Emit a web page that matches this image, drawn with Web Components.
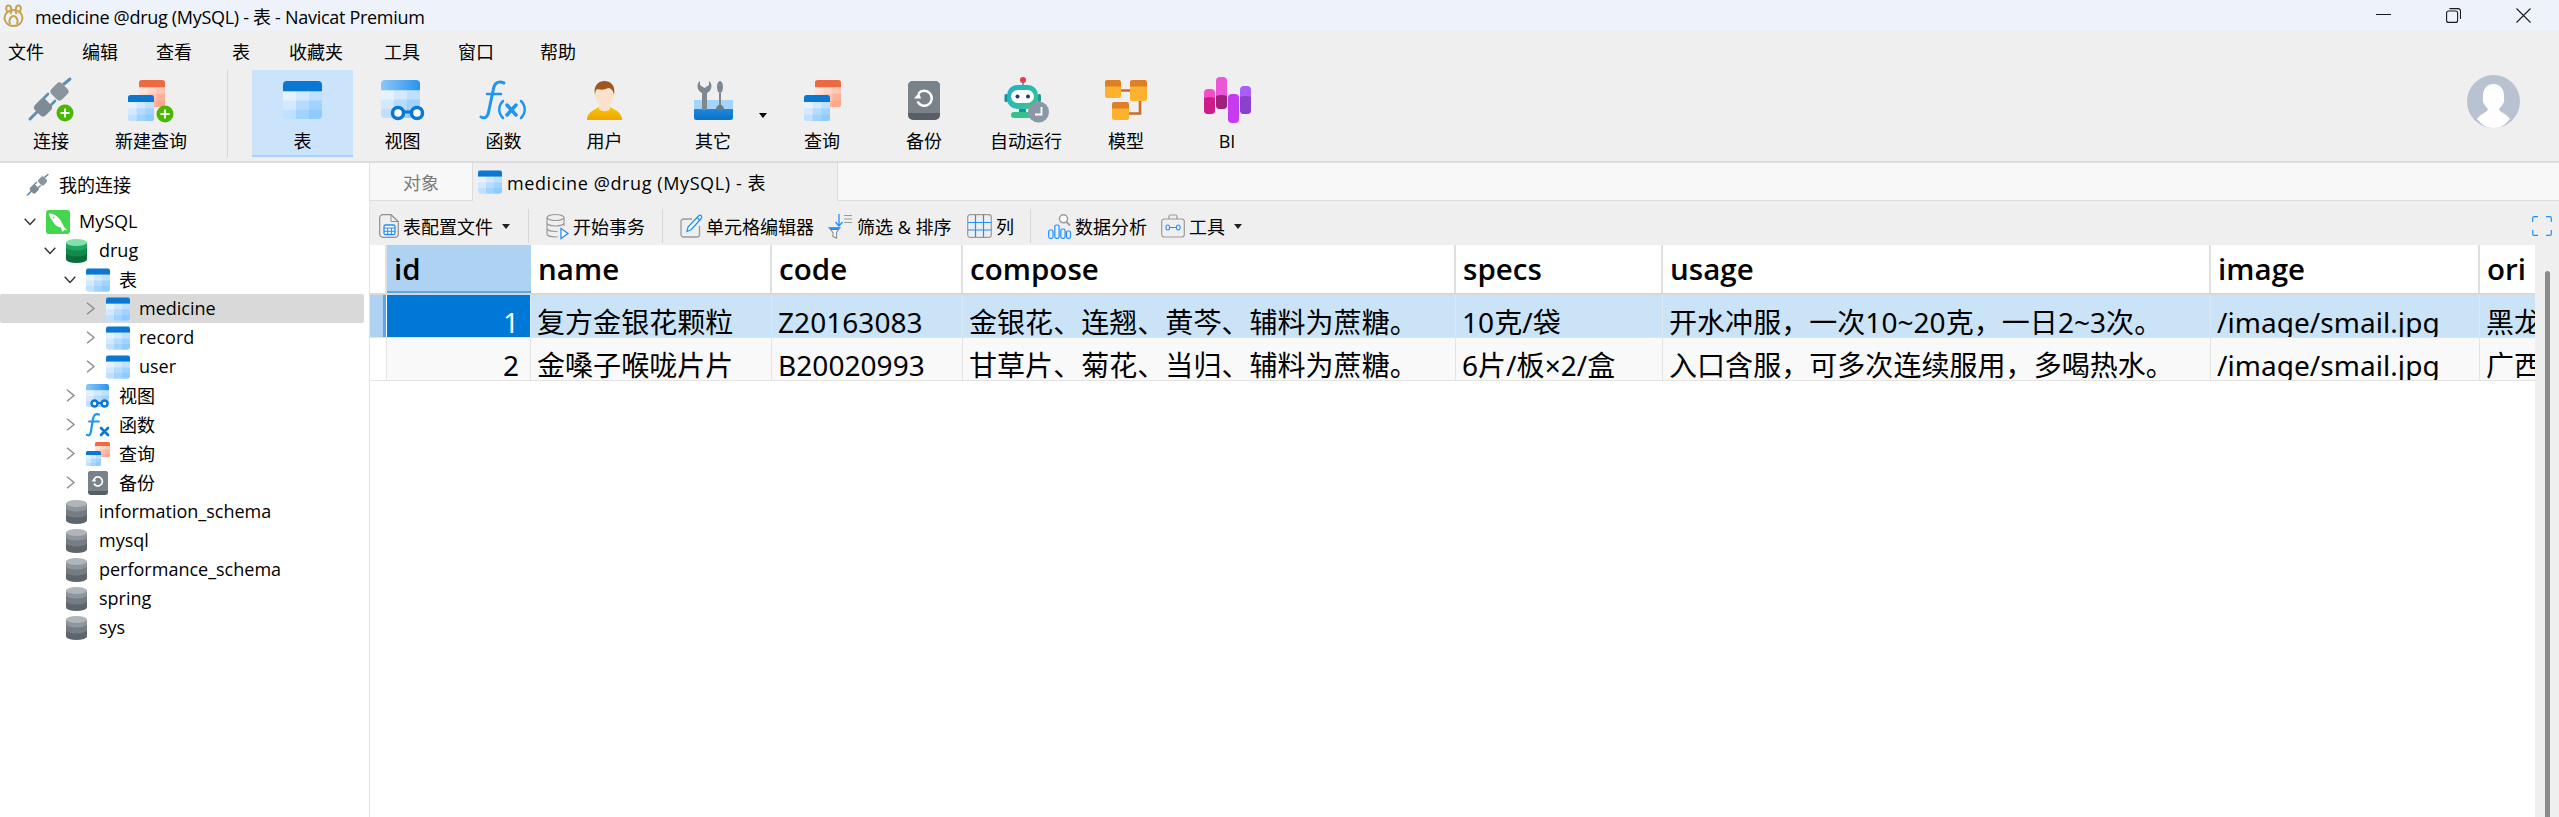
<!DOCTYPE html>
<html lang="zh">
<head>
<meta charset="utf-8">
<title>medicine @drug (MySQL) - 表 - Navicat Premium</title>
<style>
  html, body { margin: 0; padding: 0; background: #fff; }
  body { font: 18px "Open Sans", "Noto Sans CJK SC", sans-serif; color: #000; overflow: hidden; }
</style>
</head>
<body>
<navicat-app></navicat-app>
<script>
let uidCount = 0;
const uid = () => "g" + ++uidCount;

const BLUE = ["#e6f3ff", "#d2e9ff", "#bfe0ff", "#d3e9ff", "#b4dcff", "#a2d3ff", "#bfe0ff", "#a2d3ff", "#8ecbff"];
const RED = ["#fde4da", "#fed5c6", "#fdc6b2", "#fed5c6", "#fec4b0", "#fdb29a", "#fdc6b2", "#fdb29a", "#fda68b"];

// small table with a coloured head row, used by several icons
function tableShape(x, y, w, h, head, cells) {
  const id = uid();
  const top = h * 0.27;
  const cw = w / 3;
  const ch = (h - top) / 3;
  let out = `<clipPath id="${id}"><rect x="${x}" y="${y}" width="${w}" height="${h}" rx="${w * 0.1}"/></clipPath><g clip-path="url(#${id})">`;
  cells.forEach((c, i) => {
    out += `<rect x="${x + (i % 3) * cw}" y="${y + top + Math.floor(i / 3) * ch}" width="${cw + 0.5}" height="${ch + 0.5}" fill="${c}"/>`;
  });
  out += `<rect x="${x}" y="${y}" width="${w}" height="${top}" fill="${head}"/></g>`;
  return out;
}

function badge(cx, cy) {
  return `<circle cx="${cx}" cy="${cy}" r="8.5" fill="#4ab800"/><path d="M${cx - 4.5} ${cy}h9M${cx} ${cy - 4.5}v9" stroke="#fff" stroke-width="1.8"/>`;
}

function plugShape() {
  return `<path d="M1 40l8-8M35 5l6-5" stroke="#5f8db5" stroke-width="3" stroke-linecap="round"/>
    <path d="M14 20l5-5M21 27l5-5" stroke="#5f8db5" stroke-width="2.600" stroke-linecap="round"/>
    <rect x="6.500" y="21" width="15" height="15" rx="4" transform="rotate(-45 14 28.500)" fill="#7e8a94"/>
    <rect x="23" y="5" width="15" height="15" rx="4" transform="rotate(-45 30.500 12.500)" fill="#8a949c"/>`;
}

function dbShape(c) {
  return `<ellipse cx="10.500" cy="20.500" rx="10.500" ry="3.500" fill="${c[3]}"/><rect y="14" width="21" height="6.500" fill="${c[3]}"/>
    <ellipse cx="10.500" cy="14" rx="10.500" ry="3.500" fill="${c[2]}"/><rect y="8" width="21" height="6" fill="${c[2]}"/>
    <ellipse cx="10.500" cy="8" rx="10.500" ry="3.500" fill="${c[1]}"/><rect y="3.500" width="21" height="4.500" fill="${c[1]}"/>
    <ellipse cx="10.500" cy="3.500" rx="10.500" ry="3.500" fill="${c[0]}"/>`;
}

function viewGrad(id) {
  return `<linearGradient id="${id}" x1="0" x2="1" y1="0" y2="0"><stop offset="0" stop-color="#8cc8f9"/><stop offset="1" stop-color="#2a92ee"/></linearGradient>`;
}

// name -> [width, height, viewbox width, viewbox height, markup]
const ICONS = {
  plugAdd: () => [45, 43, 45, 43, plugShape() + badge(36, 34)],
  queryAdd: () => [47, 41, 47, 41, tableShape(11, 0, 26, 27, "#ec6a42", RED) + tableShape(0, 15, 26, 26, "#0a78d2", BLUE) + badge(37, 34)],
  table: () => [39, 38, 39, 38, tableShape(0, 0, 39, 38, "#0a78d2", BLUE)],
  view: () => {
    const id = uid();
    return [43, 40, 43, 40, viewGrad(id) + tableShape(0, 0, 39, 38, `url(#${id})`, BLUE) +
      `<circle cx="17" cy="33" r="5.500" fill="#fff" stroke="#0a78d2" stroke-width="3.500"/><circle cx="36" cy="33" r="5.500" fill="#fff" stroke="#0a78d2" stroke-width="3.500"/><path d="M22 32h9" stroke="#0a78d2" stroke-width="3"/>`];
  },
  fx: () => [47, 38, 47, 38, `<g fill="none" stroke="#1f96f0" stroke-linecap="round"><path d="M24 2C17-1 14 3 13 10L9 29C8 36 5 38 1 36" stroke-width="3"/><path d="M7 13H21" stroke-width="2.500"/><path d="M23 20C18 25 18 32 23 37" stroke-width="2.500"/><path d="M27 24L36 34M36 24L27 34" stroke-width="3.500"/><path d="M41 20C46 25 46 32 41 37" stroke-width="2.500"/></g>`],
  user: () => {
    const id = uid();
    return [35, 39, 35, 39, `<linearGradient id="${id}" x1="0" x2="0" y1="0" y2="1"><stop offset="0" stop-color="#f6c800"/><stop offset="1" stop-color="#f0a400"/></linearGradient>
      <path d="M0 39C0 31 7 29 12 26L23 26C28 29 35 31 35 39Z" fill="url(#${id})"/>
      <path d="M12 20h11v8c-2 3-9 3-11 0z" fill="#fbe0cb"/>
      <ellipse cx="17.500" cy="13" rx="9.500" ry="12.500" fill="#fbe0cb"/>
      <path d="M8 14C6 4 12 0 17.500 0S29 4 27 14C26 9 24 7 21 7C18 9 12 9 10 8C9 9 8 11 8 14Z" fill="#a0561f"/>`];
  },
  tools: () => {
    const id = uid();
    return [39, 39, 39, 39, `<linearGradient id="${id}" x1="0" x2="0" y1="0" y2="1"><stop offset="0" stop-color="#1e88da"/><stop offset="1" stop-color="#0a70c8"/></linearGradient>
      <path d="M0 19h39v20H0z" fill="#a4d3fb"/><path d="M0 28h39v8a3 3 0 0 1-3 3H3a3 3 0 0 1-3-3z" fill="url(#${id})"/>
      <path d="M8 11h5v18H8z" fill="#7e8890"/><path d="M6 0C2 3 3 10 8 12H13C18 10 19 3 15 0V4L10.500 7L6 4Z" fill="#7e8890"/>
      <path d="M25 12h2v13h-2z" fill="#7e8890"/><ellipse cx="26" cy="6" rx="3" ry="6" fill="#7e8890"/><path d="M22 29c0-4 2-5 4-5s4 1 4 5z" fill="#6e7880"/>`];
  },
  query: () => [37, 41, 37, 41, tableShape(11, 0, 26, 27, "#ec6a42", RED) + tableShape(0, 15, 26, 26, "#0a78d2", BLUE)],
  backup: () => [32, 39, 32, 39, `<rect width="32" height="39" rx="5" fill="#575e66"/><path d="M0 5a5 5 0 0 1 5-5h22a5 5 0 0 1 5 5v27H0z" fill="#7a8289"/>
      <path d="M10.500 12.500a7.500 7.500 0 1 1-1 8" fill="none" stroke="#fff" stroke-width="2.500"/><path d="M6 17.500L13 17.500L11 11.500Z" fill="#fff"/>`],
  robot: () => {
    const id = uid();
    return [45, 46, 45, 46, `<linearGradient id="${id}" x1="0" x2="1" y1="0" y2="1"><stop offset="0" stop-color="#1fb0d0"/><stop offset="1" stop-color="#38c58e"/></linearGradient>
      <circle cx="19" cy="3" r="3" fill="#ec3a4c"/><path d="M19 5v4" stroke="#4a8aa0" stroke-width="1.500"/>
      <rect x="0.500" y="17" width="3.500" height="8" rx="1.500" fill="#138a9e"/><rect x="33.500" y="17" width="3.500" height="8" rx="1.500" fill="#1f9d88"/>
      <rect x="3" y="8" width="31" height="24" rx="10" fill="url(#${id})"/>
      <rect x="7" y="13" width="23" height="13" rx="6.500" fill="#fff"/><circle cx="13.500" cy="19.500" r="2" fill="#1e3a70"/><circle cx="24" cy="19.500" r="2" fill="#1e3a70"/>
      <path d="M15 32h7v4h-7z" fill="#1c8ea5"/><rect x="7" y="35" width="25" height="6" rx="3" fill="#35c28f"/>
      <circle cx="34.500" cy="35" r="10.500" fill="#8a97a5"/><path d="M37.500 30v7.500H31" fill="none" stroke="#fff" stroke-width="1.800"/>`];
  },
  model: () => {
    const box = (x, y, w, h) => {
      const id = uid();
      return `<clipPath id="${id}"><rect x="${x}" y="${y}" width="${w}" height="${h}" rx="2.500"/></clipPath><g clip-path="url(#${id})"><rect x="${x}" y="${y}" width="${w}" height="${h}" fill="#fdb22f"/><rect x="${x}" y="${y}" width="${w}" height="6.500" fill="#de7f28"/></g>`;
    };
    return [42, 40, 42, 40, `<path d="M16 10.500h9M35 21v12.500H24" fill="none" stroke="#c96f2a" stroke-width="2.600"/>` + box(0, 0, 16, 18) + box(25, 0, 17, 21) + box(7, 22, 17, 18)];
  },
  bi: () => {
    const bar = (x, y, h, a, b, split) => {
      const id = uid();
      return `<clipPath id="${id}"><rect x="${x}" y="${y}" width="11" height="${h}" rx="4"/></clipPath><g clip-path="url(#${id})"><rect x="${x}" y="${y}" width="11" height="${h}" fill="${a}"/><ellipse cx="${x + 5.500}" cy="${split + 12}" rx="13" ry="12" fill="${b}"/></g>`;
    };
    return [47, 46, 47, 46, bar(0, 12, 25, "#f250c8", "#d01c88", 20) + bar(12, 0, 32, "#ec56d8", "#a0207c", 18) + bar(24, 17, 29, "#c53cf0", "#e02ea0", 64) + bar(36, 9, 28, "#ae5cff", "#8a42cc", 19)];
  },
  plug: () => [23, 23, 45, 43, plugShape()],
  mysql: () => [24, 24, 24, 24, `<rect width="24" height="24" rx="3" fill="#45d64f"/><path d="M3 3.500C8 3 13 7 15.500 12C17 15 18.500 18 21.500 20.500L18.500 19.800L16.500 22L15 17.500C11 17 8 14 6.500 11C5.500 9 3 7 3 3.500Z" fill="#fff"/><circle cx="7.500" cy="7.500" r=".8" fill="#45d64f"/>`],
  dbGreen: () => [21, 24, 21, 24, dbShape(["#7fe3a8", "#23a460", "#128a4c", "#0a6e38"])],
  dbGray: () => [21, 24, 21, 24, dbShape(["#b0b5bb", "#8f959b", "#767c83", "#5f656c"])],
  tableS: () => [24, 24, 39, 38, tableShape(0, 0, 39, 38, "#0a78d2", BLUE)],
  viewS: () => {
    const id = uid();
    return [24, 24, 24, 24, viewGrad(id) + tableShape(0, 0, 23, 23, `url(#${id})`, BLUE) +
      `<circle cx="8.500" cy="19.500" r="3" fill="#fff" stroke="#0a78d2" stroke-width="2.400"/><circle cx="18.500" cy="19.500" r="3" fill="#fff" stroke="#0a78d2" stroke-width="2.400"/><path d="M11 19h5" stroke="#0a78d2" stroke-width="2"/>`];
  },
  fxS: () => [24, 24, 24, 24, `<g fill="none" stroke="#1f96f0" stroke-linecap="round"><path d="M13 1.500C9 0 7.500 3 7 6L5 18C4.500 22 3 23 1 22" stroke-width="2.200"/><path d="M3 8.500H13" stroke-width="2"/><path d="M15 15L22 22M22 15L15 22" stroke="#0a78d2" stroke-width="2.600"/></g>`],
  queryS: () => [24, 24, 24, 24, tableShape(9, 0, 15, 15, "#ec6a42", RED) + tableShape(0, 9, 15, 15, "#0a78d2", BLUE)],
  backupS: () => [24, 24, 24, 24, `<rect x="2" width="20" height="24" rx="3" fill="#575e66"/><path d="M2 3a3 3 0 0 1 3-3h14a3 3 0 0 1 3 3v17H2z" fill="#7a8289"/><path d="M8.500 7.500a4.500 4.500 0 1 1-.6 5" fill="none" stroke="#fff" stroke-width="1.700"/><path d="M5.500 10.500L10 10.500L8.500 6.500Z" fill="#fff"/>`],
  tProfile: () => [20, 24, 20, 24, `<path d="M4 .7H12L19.300 7.500V20A3.300 3.300 0 0 1 16 23.300H4A3.300 3.300 0 0 1 .7 20V4A3.300 3.300 0 0 1 4 .7Z" fill="none" stroke="#8f8f8f" stroke-width="1.200"/><path d="M12 1V7.500H19" fill="none" stroke="#8f8f8f" stroke-width="1"/><rect x="5" y="11" width="11" height="9.500" rx="1.500" fill="#fff" stroke="#1e90ff" stroke-width="1.300"/><path d="M5 14h11M5 17.300h11M8.700 14v6.500M12.400 14v6.500" stroke="#1e90ff" stroke-width="1"/>`],
  tTrans: () => [23, 25, 23, 25, `<g fill="none" stroke="#9a9a9a" stroke-width="1.200"><ellipse cx="9.500" cy="3.500" rx="8.500" ry="3"/><path d="M1 3.500V20c0 1.700 3.800 3 8.500 3 .8 0 1.500 0 2-.1M18 3.500V12M1 9c0 1.700 3.800 3 8.500 3s8.500-1.300 8.500-3M1 14.500c0 1.700 3.800 3 8.500 3 .8 0 1.500 0 2-.1"/></g><path d="M15 14.500L22 19.500L15 24.500Z" fill="#fff" stroke="#1e90ff" stroke-width="1.300"/>`],
  tEdit: () => [22, 24, 22, 24, `<path d="M12 5H3.500A2.500 2.500 0 0 0 1 7.500V20.500A2.500 2.500 0 0 0 3.500 23H17A2.500 2.500 0 0 0 19.500 20.500V12" fill="none" stroke="#9a9a9a" stroke-width="1.300"/><path d="M7 17.500L8 13L18.500 2C19.500 1 20.800 1 21.300 1.800C22 2.700 21.800 3.800 21 4.700L11 15.800Z" fill="#fff" stroke="#1e90ff" stroke-width="1.300"/><path d="M17 3.500l3 3" stroke="#1e90ff" stroke-width="1.100"/>`],
  tFilter: () => [25, 25, 25, 25, `<path d="M11 0V11M7.500 8L11 12L14.500 8" fill="none" stroke="#1e90ff" stroke-width="1.300"/><path d="M16 1.500h8M16 5h8M16 8.500h8" stroke="#9a9a9a" stroke-width="1"/><path d="M1 13.500H12L8.500 18.500V24L5 22.500V18.500Z" fill="#fff" stroke="#8f8f8f" stroke-width="1.200"/><path d="M1.500 14H11.500L10 16H3Z" fill="#1e90ff"/>`],
  tColumns: () => [25, 24, 25, 24, `<rect x=".7" y=".7" width="23.600" height="22.600" rx="2.500" fill="none" stroke="#9a9a9a" stroke-width="1.200"/><path d="M8.500 1V23M16.500 1V23M1 8.500H24M1 16H24" stroke="#1e90ff" stroke-width="1.200"/>`],
  tAnalyse: () => [23, 25, 23, 25, `<g fill="none" stroke="#1e90ff" stroke-width="1.200"><rect x=".7" y="16" width="4.300" height="8.300" rx="1.500"/><rect x="6.800" y="11" width="4.300" height="13.300" rx="1.500"/><rect x="12.800" y="15" width="4.300" height="9.300" rx="1.500"/><rect x="18.500" y="17" width="4" height="7.300" rx="1.500"/></g><circle cx="15.500" cy="4.800" r="4" fill="#fff" stroke="#9a9a9a" stroke-width="1.500"/><path d="M18.500 8L22 11.500" stroke="#9a9a9a" stroke-width="1.800"/>`],
  tTools: () => [24, 24, 24, 24, `<path d="M8 5V2.500A1.500 1.500 0 0 1 9.500 1H14.500A1.500 1.500 0 0 1 16 2.500V5" fill="none" stroke="#9a9a9a" stroke-width="1.200"/><rect x=".7" y="5" width="22.600" height="18" rx="2.500" fill="none" stroke="#9a9a9a" stroke-width="1.200"/><g fill="none" stroke="#1e90ff" stroke-width="1.100"><rect x="5" y="11" width="3.500" height="5" rx="1.700"/><rect x="15.500" y="11" width="3.500" height="5" rx="1.700"/></g><path d="M8.500 13.500H15.500" stroke="#1e90ff" stroke-width="1"/>`]
};

function iconSvg(name) {
  const [w, h, vw, vh, body] = ICONS[name]();
  return `<svg width="${w}" height="${h}" viewBox="0 0 ${vw} ${vh}" style="display:block;overflow:visible">${body}</svg>`;
}

class TitleBar extends HTMLElement {
  constructor() {
    super();
    this.attachShadow({ mode: "open" });
    this.shadowRoot.innerHTML = `
      <style>
        :host { display: flex; align-items: center; height: 31px; background: #eef3fb; padding-left: 3px; padding-right: 28px; }
        .logo { width: 21px; height: 23px; margin-right: 11px; flex: none; }
        .text { flex: 1; white-space: nowrap; letter-spacing: -.3px; }
        .ctl { display: block; flex: none; margin-left: 55px; }
      </style>
      <svg class="logo" viewBox="0 0 21 23"><g fill="none" stroke="#c9a24a" stroke-width="2"><ellipse cx="10.500" cy="14" rx="9" ry="8"/><path d="M5 9C2 5 3 1 6 1.500C8.500 2 9 7 7.500 10M16 9C19 5 18 1 15 1.500C12.500 2 12 7 13.500 10"/><path d="M7 20C5 16 8 12 10.500 12S16 16 14 20"/></g></svg>
      <span class="text"><slot></slot></span>
      <svg class="ctl" width="15" height="15" viewBox="0 0 15 15"><path d="M0 6.500h15" stroke="#1a1a1a" stroke-width="1"/></svg>
      <svg class="ctl" width="15" height="15" viewBox="0 0 15 15"><g fill="none" stroke="#1a1a1a" stroke-width="1.100"><rect x=".6" y="3" width="11" height="11.400" rx="2"/><path d="M3.500 .6H12A2.500 2.500 0 0 1 14.500 3V11"/></g></svg>
      <svg class="ctl" width="15" height="15" viewBox="0 0 15 15"><path d="M.5 .5L14.500 14.500M14.500 .5L.5 14.500" stroke="#1a1a1a" stroke-width="1.100"/></svg>`;
  }
}

class MenuBar extends HTMLElement {
  constructor() {
    super();
    this.attachShadow({ mode: "open" });
    this.shadowRoot.innerHTML = `
      <style>
        :host { display: flex; align-items: center; height: 39px; padding-top: 1px; box-sizing: border-box; padding-left: 8px; background: #efefef; }
        ::slotted(span) { margin-right: 38px; white-space: nowrap; }
      </style>
      <slot></slot>`;
  }
}

class RibbonButton extends HTMLElement {
  constructor() {
    super();
    this.attachShadow({ mode: "open" });
    this.shadowRoot.innerHTML = `
      <style>
        :host { display: flex; flex-direction: column; align-items: center; box-sizing: border-box; height: 87px; padding-top: 7px; position: relative; flex: none; }
        :host([active]) { background: #cce4fb; border-bottom: 2px solid #a8d2f7; }
        .icon { height: 46px; display: flex; align-items: center; justify-content: center; }
        .label { margin-top: 6px; line-height: 24px; white-space: nowrap; }
        .caret { position: absolute; left: 105px; top: 43px; width: 0; height: 0; border: 4px solid transparent; border-top: 5px solid #000; border-bottom: 0; }
      </style>
      <div class="icon"></div>
      <div class="label"><slot></slot></div>`;
    this.shadowRoot.querySelector(".icon").innerHTML = iconSvg(this.getAttribute("icon"));
    this.style.width = this.getAttribute("w") + "px";
    if (this.hasAttribute("caret")) {
      const c = document.createElement("div");
      c.className = "caret";
      this.shadowRoot.appendChild(c);
    }
  }
}

class RibbonBar extends HTMLElement {
  constructor() {
    super();
    this.attachShadow({ mode: "open" });
    this.shadowRoot.innerHTML = `
      <style>
        :host { display: flex; height: 93px; box-sizing: border-box; background: #efefef; border-bottom: 2px solid #dcdcdc; }
        .avatar { margin-left: auto; margin-right: 39px; margin-top: 5px; flex: none; }
      </style>
      <slot></slot>
      <svg class="avatar" width="53" height="53" viewBox="0 0 53 53">
        <circle cx="26.500" cy="26.500" r="26.500" fill="#b9c2d1"/>
        <path d="M10 44C14 38 20 38 21 34C17 30 15 26 16 24C15 14 20 9 26.500 9S38 14 37 24C38 26 36 30 32 34C33 38 39 38 43 44C38 50 33 53 26.500 53S15 50 10 44Z" fill="#fff"/>
      </svg>`;
  }
}

class RibbonSep extends HTMLElement {
  constructor() {
    super();
    this.attachShadow({ mode: "open" });
    this.shadowRoot.innerHTML = `<style>:host { display: block; flex: none; width: 1px; height: 87px; margin: 0 24px 0 27px; background: #d6d6d6; }</style>`;
  }
}

class TreeRow extends HTMLElement {
  constructor() {
    super();
    this.attachShadow({ mode: "open" });
    this.shadowRoot.innerHTML = `
      <style>
        :host { display: flex; align-items: center; height: 29px; margin-right: 5px; border-radius: 2px; white-space: nowrap; }
        :host([selected]) { background: #d9d9d9; }
        .chev { width: 22px; height: 29px; flex: none; display: flex; align-items: center; }
        .icon { width: 33px; flex: none; }
        .text { padding-bottom: 2px; }
      </style>
      <div class="chev"></div>
      <div class="icon"></div>
      <span class="text"><slot></slot></span>`;
    const level = Number(this.getAttribute("level"));
    this.style.paddingLeft = 24 + 20 * level + "px";
    this.shadowRoot.querySelector(".icon").innerHTML = iconSvg(this.getAttribute("icon"));
    const chev = this.getAttribute("chev");
    if (chev === "open") {
      this.shadowRoot.querySelector(".chev").innerHTML = `<svg width="12" height="8" viewBox="0 0 12 8"><path d="M.7 .7L6 6.500L11.300 .7" fill="none" stroke="#333" stroke-width="1.400"/></svg>`;
    } else if (chev === "closed") {
      this.shadowRoot.querySelector(".chev").innerHTML = `<svg width="10" height="13" viewBox="0 0 10 13" style="margin-left:2px"><path d="M1 .7L8 6.500L1 12.300" fill="none" stroke="#8c8c8c" stroke-width="1.400"/></svg>`;
    }
  }
}

class DbTree extends HTMLElement {
  constructor() {
    super();
    this.attachShadow({ mode: "open" });
    this.shadowRoot.innerHTML = `
      <style>
        :host { display: block; flex: none; width: 370px; box-sizing: border-box; padding-top: 8px; background: #fff; border-right: 1px solid #e2e2e2; }
        .head { display: flex; align-items: center; height: 28px; margin-bottom: 8px; padding-left: 27px; gap: 9px; }
        .head span:last-child { padding-bottom: 2px; }
      </style>
      <div class="head"><span class="plug"></span><span>我的连接</span></div>
      <slot></slot>`;
    this.shadowRoot.querySelector(".plug").innerHTML = iconSvg("plug");
  }
}

class TabStrip extends HTMLElement {
  constructor() {
    super();
    this.attachShadow({ mode: "open" });
    this.shadowRoot.innerHTML = `
      <style>
        :host { display: flex; height: 38px; box-sizing: border-box; background: #f8f8f8; border-bottom: 1px solid #dcdcdc; }
        .tab { display: flex; align-items: center; box-sizing: border-box; height: 38px; border-right: 1px solid #dcdcdc; white-space: nowrap; }
        .obj { width: 103px; height: 37px; justify-content: center; color: #7c7c7c; }
        .cur { width: 365px; background: #efefef; padding-left: 5px; gap: 5px; margin-bottom: -1px; letter-spacing: .6px; }
      </style>
      <div class="tab obj">对象</div>
      <div class="tab cur"><span class="ic"></span><span>medicine @drug (MySQL) - 表</span></div>`;
    this.shadowRoot.querySelector(".ic").innerHTML = iconSvg("tableS");
  }
}

class ToolButton extends HTMLElement {
  constructor() {
    super();
    this.attachShadow({ mode: "open" });
    this.shadowRoot.innerHTML = `
      <style>
        :host { display: flex; align-items: center; flex: none; height: 24px; margin-top: 13px; white-space: nowrap; }
        .icon { flex: none; margin-right: 4px; }
        .caret { width: 0; height: 0; margin-left: 9px; border: 4.500px solid transparent; border-top: 5px solid #222; border-bottom: 0; }
      </style>
      <div class="icon"></div><slot></slot>`;
    this.shadowRoot.querySelector(".icon").innerHTML = iconSvg(this.getAttribute("icon"));
    this.style.width = this.getAttribute("w") + "px";
    if (this.hasAttribute("caret")) {
      const c = document.createElement("div");
      c.className = "caret";
      this.shadowRoot.appendChild(c);
    }
  }
}

class GridToolbar extends HTMLElement {
  constructor() {
    super();
    this.attachShadow({ mode: "open" });
    this.shadowRoot.innerHTML = `
      <style>
        :host { display: flex; height: 44px; background: #efefef; padding-left: 9px; }
        .sep { flex: none; width: 1px; height: 34px; margin: 8px 17px 0 0; background: #d8d8d8; }
        .full { margin-left: auto; margin-right: 7px; margin-top: 15px; flex: none; }
      </style>
      <tool-button icon="tProfile" w="149" caret>表配置文件</tool-button>
      <div class="sep"></div>
      <tool-button icon="tTrans" w="116">开始事务</tool-button>
      <div class="sep"></div>
      <tool-button icon="tEdit" w="148">单元格编辑器</tool-button>
      <tool-button icon="tFilter" w="139">筛选 &amp; 排序</tool-button>
      <tool-button icon="tColumns" w="63">列</tool-button>
      <div class="sep"></div>
      <tool-button icon="tAnalyse" w="113">数据分析</tool-button>
      <tool-button icon="tTools" w="90" caret>工具</tool-button>
      <svg class="full" width="20" height="20" viewBox="0 0 20 20"><path d="M.7 6V2A1.300 1.300 0 0 1 2 .7H6M14 .7H18A1.300 1.300 0 0 1 19.300 2V6M19.300 14V18A1.300 1.300 0 0 1 18 19.300H14M6 19.300H2A1.300 1.300 0 0 1 .7 18V14" fill="none" stroke="#1e90ff" stroke-width="1.200"/></svg>`;
  }
}

const COLUMNS = ["id", "name", "code", "compose", "specs", "usage", "image", "ori"];
const ROWS = [
  ["1", "复方金银花颗粒", "Z20163083", "金银花、连翘、黄芩、辅料为蔗糖。", "10克/袋", "开水冲服，一次10~20克，一日2~3次。", "/image/smail.jpg", "黑龙江"],
  ["2", "金嗓子喉咙片片", "B20020993", "甘草片、菊花、当归、辅料为蔗糖。", "6片/板×2/盒", "入口含服，可多次连续服用，多喝热水。", "/image/smail.jpg", "广西"]
];

class DataGrid extends HTMLElement {
  constructor() {
    super();
    this.attachShadow({ mode: "open" });
    const cell = (text, cls) => `<div class="c ${cls || ""}">${text}</div>`;
    let html = `<div class="row head"><div class="c gut"></div>` +
      COLUMNS.map((c, i) => cell(c, i === 0 ? "sel-col" : "")).join("") + `</div>`;
    ROWS.forEach((r, n) => {
      html += `<div class="row ${n === 0 ? "on" : "off"}"><div class="c gut"></div>` +
        r.map((v, i) => cell(v, i === 0 ? "num" : "")).join("") + `</div>`;
    });
    this.shadowRoot.innerHTML = `
      <style>
        :host { display: block; flex: none; width: 2165px; background: #fff; overflow: hidden; }
        .row { display: grid; grid-template-columns: 17px 144px 241px 191px 493px 207px 548px 269px 55px; box-sizing: border-box; height: 43px; border-bottom: 1px solid #e4e4e4; }
        .c { box-sizing: border-box; height: 42px; overflow: hidden; white-space: nowrap; padding: 6px 0 0 6px; font-family: "Noto Sans", "Noto Sans CJK SC", sans-serif; font-size: 28px; line-height: 42px; font-variant-numeric: tabular-nums; letter-spacing: .05px; border-right: 1px solid #e4e4e4; }
        .c:last-child { border-right: 0; }
        .gut { padding: 0; }
        .head { height: 50px; border-bottom: 2px solid #d8d8d8; }
        .head .c { height: 48px; padding: 0 0 0 7px; line-height: 48px; font-family: "Open Sans", sans-serif; font-size: 29.500px; font-weight: 600; border-right: 2px solid #e0e0e0; }
        .head .c:last-child { border-right: 0; }
        .head .sel-col { background: #aed3f2; height: 48px; box-shadow: inset 0 -2px 0 #5aa6e8; border-right: 0; margin-bottom: -2px; }
        .on { background: #cbe3f7; }
        .on .c { border-right-color: #dbe9f4; }
        .on .gut { background: linear-gradient(90deg, #aed3f2 0 13px, #5aa6e8 13px 16px, #fff 16px); border-right: 0; }
        .on .num { background: #0078d7; color: #fff; }
        .off { background: #f9f9f9; }
        .off .gut { background: #fff; }
        .num { text-align: right; padding-right: 11px; padding-left: 0; }
      </style>${html}`;
  }
}

class ScrollStrip extends HTMLElement {
  constructor() {
    super();
    this.attachShadow({ mode: "open" });
    this.shadowRoot.innerHTML = `
      <style>
        :host { display: block; flex: 1; box-sizing: border-box; background: #efefef; padding: 26px 9px 0 10px; }
        .thumb { height: 100%; background: #8b8b8b; border-radius: 3px 3px 0 0; }
      </style>
      <div class="thumb"></div>`;
  }
}

class NavicatApp extends HTMLElement {
  constructor() {
    super();
    this.attachShadow({ mode: "open" });
    this.shadowRoot.innerHTML = `
      <style>
        :host { display: flex; flex-direction: column; width: 2559px; height: 817px; overflow: hidden; }
        .main { display: flex; flex: 1; min-height: 0; }
        .right { flex: 1; display: flex; flex-direction: column; min-width: 0; }
        .body { flex: 1; display: flex; min-height: 0; }
      </style>
      <title-bar>medicine @drug (MySQL) - 表 - Navicat Premium</title-bar>
      <menu-bar>
        <span>文件</span><span>编辑</span><span style="margin-right:40px">查看</span><span style="margin-right:39px">表</span><span style="margin-right:41px">收藏夹</span><span>工具</span><span style="margin-right:46px">窗口</span><span>帮助</span>
      </menu-bar>
      <ribbon-bar>
        <ribbon-button icon="plugAdd" w="102">连接</ribbon-button>
        <ribbon-button icon="queryAdd" w="98">新建查询</ribbon-button>
        <ribbon-sep></ribbon-sep>
        <ribbon-button icon="table" w="101" active>表</ribbon-button>
        <ribbon-button icon="view" w="99">视图</ribbon-button>
        <ribbon-button icon="fx" w="103">函数</ribbon-button>
        <ribbon-button icon="user" w="99">用户</ribbon-button>
        <ribbon-button icon="tools" w="118" caret>其它</ribbon-button>
        <ribbon-button icon="query" w="100">查询</ribbon-button>
        <ribbon-button icon="backup" w="104">备份</ribbon-button>
        <ribbon-button icon="robot" w="100">自动运行</ribbon-button>
        <ribbon-button icon="model" w="100">模型</ribbon-button>
        <ribbon-button icon="bi" w="102">BI</ribbon-button>
      </ribbon-bar>
      <div class="main">
        <db-tree>
          <tree-row level="0" chev="open" icon="mysql">MySQL</tree-row>
          <tree-row level="1" chev="open" icon="dbGreen">drug</tree-row>
          <tree-row level="2" chev="open" icon="tableS">表</tree-row>
          <tree-row level="3" chev="closed" icon="tableS" selected>medicine</tree-row>
          <tree-row level="3" chev="closed" icon="tableS">record</tree-row>
          <tree-row level="3" chev="closed" icon="tableS">user</tree-row>
          <tree-row level="2" chev="closed" icon="viewS">视图</tree-row>
          <tree-row level="2" chev="closed" icon="fxS">函数</tree-row>
          <tree-row level="2" chev="closed" icon="queryS">查询</tree-row>
          <tree-row level="2" chev="closed" icon="backupS">备份</tree-row>
          <tree-row level="1" icon="dbGray">information_schema</tree-row>
          <tree-row level="1" icon="dbGray">mysql</tree-row>
          <tree-row level="1" icon="dbGray">performance_schema</tree-row>
          <tree-row level="1" icon="dbGray">spring</tree-row>
          <tree-row level="1" icon="dbGray">sys</tree-row>
        </db-tree>
        <div class="right">
          <tab-strip></tab-strip>
          <grid-toolbar></grid-toolbar>
          <div class="body">
            <data-grid></data-grid>
            <scroll-strip></scroll-strip>
          </div>
        </div>
      </div>`;
  }
}

customElements.define("title-bar", TitleBar);
customElements.define("menu-bar", MenuBar);
customElements.define("ribbon-button", RibbonButton);
customElements.define("ribbon-sep", RibbonSep);
customElements.define("ribbon-bar", RibbonBar);
customElements.define("tree-row", TreeRow);
customElements.define("db-tree", DbTree);
customElements.define("tab-strip", TabStrip);
customElements.define("tool-button", ToolButton);
customElements.define("grid-toolbar", GridToolbar);
customElements.define("data-grid", DataGrid);
customElements.define("scroll-strip", ScrollStrip);
customElements.define("navicat-app", NavicatApp);
</script>
</body>
</html>
